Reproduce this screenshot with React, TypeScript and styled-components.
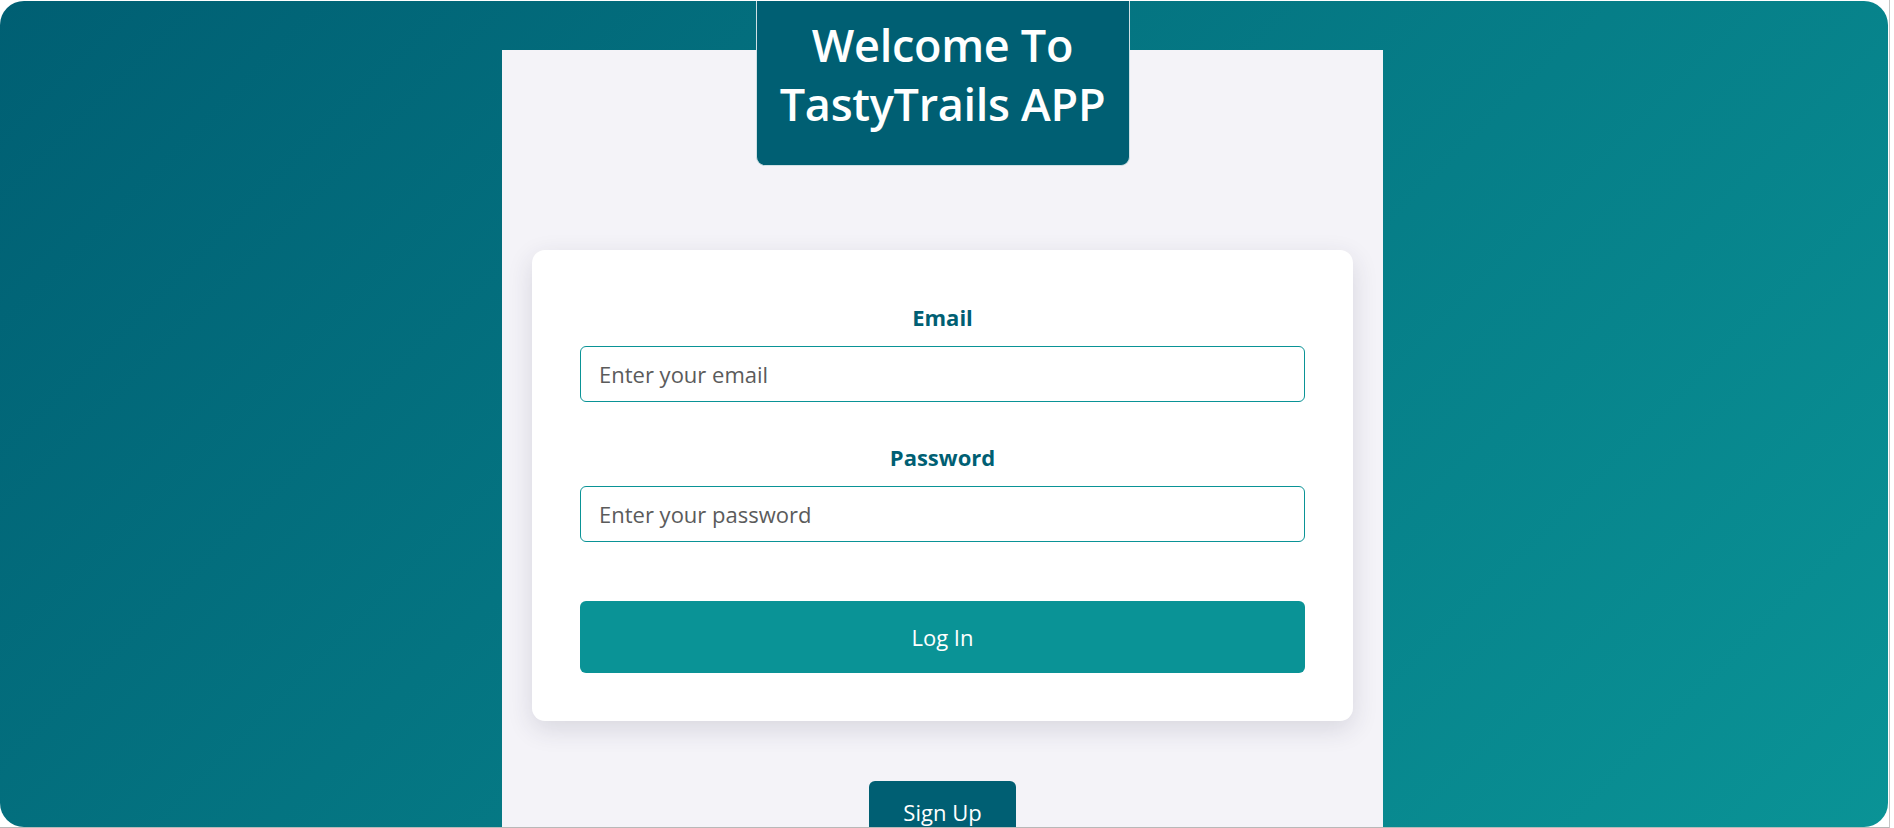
import React from "react";
import styled, { createGlobalStyle } from "styled-components";

const GlobalStyle = createGlobalStyle`
  html, body {
    margin: 0;
    padding: 0;
    background: #ffffff;
    font-family: "Open Sans", "Noto Sans", "Liberation Sans", sans-serif;
  }
  * { box-sizing: border-box; }
`;

const Frame = styled.div`
  width: 1890px;
  height: 828px;
  padding-top: 1px;
  border-right: 1px solid #c6c6c6;
  border-bottom: 1px solid #b8b8b8;
  overflow: hidden;
  background: #ffffff;
`;

const Backdrop = styled.main`
  width: 1888px;
  height: 826px;
  border-radius: 24px;
  background: linear-gradient(135deg, #005f73 0%, #0a9396 100%);
  overflow: hidden;
  display: flex;
  justify-content: center;
  padding: 49px 3px 0 0;
`;

const Panel = styled.section`
  width: 881px;
  min-height: 900px;
  background: #f4f3f8;
  display: flex;
  flex-direction: column;
  align-items: center;
`;

const Banner = styled.header`
  margin-top: -49px;
  width: 374px;
  padding: 14px 0 32px;
  background: #005f73;
  border: 1px solid #cfe0e4;
  border-top: none;
  border-radius: 0 0 9px 9px;
  text-align: center;
`;

const Title = styled.h1`
  margin: 0;
  font-size: 45px;
  line-height: 59px;
  font-weight: 600;
  color: #ffffff;
  letter-spacing: -0.3px;
`;

const Card = styled.form`
  margin-top: 84px;
  width: 821px;
  background: #ffffff;
  border-radius: 13px;
  box-shadow: 0 8px 26px rgba(40, 40, 70, 0.14);
  padding: 51px 48px 48px;
  display: flex;
  flex-direction: column;
`;

const Field = styled.div<{ $gap?: number }>`
  display: flex;
  flex-direction: column;
  gap: 13px;
  margin-top: ${(p) => p.$gap ?? 0}px;
`;

const Label = styled.label`
  display: block;
  text-align: center;
  font-size: 22px;
  line-height: 32px;
  font-weight: 700;
  color: #005f73;
`;

const Input = styled.input`
  width: 100%;
  height: 56px;
  padding: 0 18px;
  border: 1px solid #0a9396;
  border-radius: 6px;
  background: #ffffff;
  font-family: inherit;
  font-size: 22px;
  color: #333;
  outline: none;
  &::placeholder {
    color: #5b5b5b;
  }
`;

const Button = styled.button<{ $variant: "primary" | "dark" }>`
  border: none;
  border-radius: 6px;
  color: #ffffff;
  font-family: inherit;
  font-size: 22px;
  cursor: pointer;
  background: ${(p) => (p.$variant === "primary" ? "#0a9396" : "#005f73")};
`;

const LoginButton = styled(Button)`
  margin-top: 59px;
  width: 100%;
  height: 72px;
`;

const SignUpButton = styled(Button)`
  margin-top: 60px;
  width: 147px;
  height: 62px;
  padding: 0;
  line-height: 60px;
`;

export default function App() {
  return (
    <>
      <GlobalStyle />
      <Frame>
        <Backdrop>
          <Panel>
            <Banner>
              <Title>
                Welcome To
                <br />
                TastyTrails APP
              </Title>
            </Banner>
            <Card onSubmit={(e) => e.preventDefault()}>
              <Field>
                <Label htmlFor="email">Email</Label>
                <Input id="email" type="email" placeholder="Enter your email" />
              </Field>
              <Field $gap={39}>
                <Label htmlFor="password">Password</Label>
                <Input id="password" type="password" placeholder="Enter your password" />
              </Field>
              <LoginButton type="submit" $variant="primary">
                Log In
              </LoginButton>
            </Card>
            <SignUpButton type="button" $variant="dark">
              Sign Up
            </SignUpButton>
          </Panel>
        </Backdrop>
      </Frame>
    </>
  );
}
